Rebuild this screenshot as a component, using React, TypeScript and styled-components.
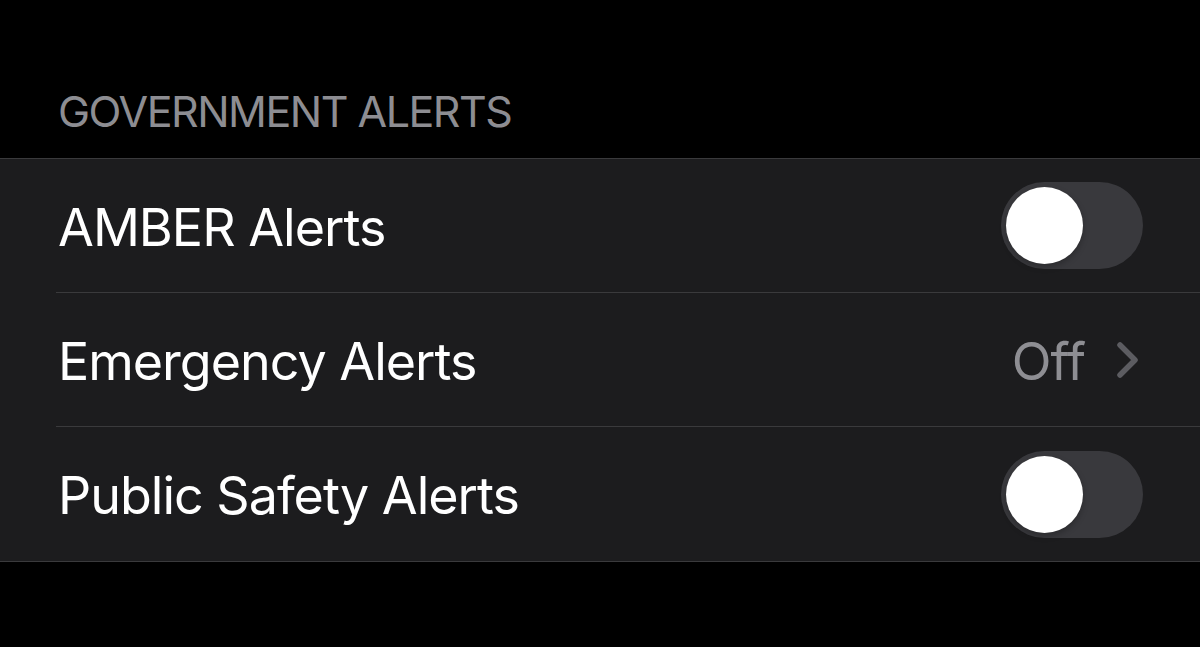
import React from "react";
import styled, { createGlobalStyle } from "styled-components";

const Global = createGlobalStyle`
  html, body { margin: 0; padding: 0; background: #000; }
  body { font-family: Inter, "Noto Sans", sans-serif; -webkit-font-smoothing: antialiased; }
`;

const Page = styled.div`
  width: 1200px;
  height: 647px;
  background: #000;
  overflow: hidden;
`;

const SectionHeader = styled.div`
  padding: 90px 0 25px 58px;
  font-size: 43px;
  line-height: 43px;
  color: #8d8d92;
  letter-spacing: -1.5px;
`;

const Group = styled.div`
  background: #1c1c1e;
  border-top: 1px solid #3a3a3c;
  border-bottom: 1px solid #3a3a3c;
`;

const Row = styled.div`
  padding-left: 56px;
`;

const RowInner = styled.div<{ $last?: boolean; $pr?: number }>`
  height: ${(p) => (p.$last ? 134 : 133)}px;
  display: flex;
  align-items: center;
  padding-left: 2px;
  padding-right: ${(p) => p.$pr ?? 57}px;
  border-bottom: ${(p) => (p.$last ? "none" : "1px solid #3a3a3c")};
`;

const Label = styled.span`
  flex: 1;
  font-size: 52px;
  letter-spacing: -1px;
  color: #fff;
  padding-top: 3px;
`;

const Value = styled.span`
  font-size: 52px;
  letter-spacing: -1px;
  color: #8e8e93;
  margin-right: 31px;
  padding-top: 3px;
`;

const Track = styled.div`
  width: 142px;
  height: 87px;
  border-radius: 44px;
  background: #39393d;
  display: flex;
  align-items: center;
  padding-left: 5px;
  box-sizing: border-box;
`;

const Knob = styled.div`
  width: 77px;
  height: 77px;
  border-radius: 50%;
  background: #fff;
  box-shadow: 0 3px 6px rgba(0, 0, 0, 0.25);
`;

const Toggle = () => (
  <Track>
    <Knob />
  </Track>
);

const Chevron = () => (
  <svg width="24" height="38" viewBox="0 0 24 38" fill="none">
    <path d="M4 4 L19 19 L4 34" stroke="#5c5c61" strokeWidth="5.5" strokeLinecap="round" strokeLinejoin="round" />
  </svg>
);

export default function App() {
  return (
    <Page>
      <Global />
      <SectionHeader>GOVERNMENT ALERTS</SectionHeader>
      <Group>
        <Row>
          <RowInner>
            <Label>AMBER Alerts</Label>
            <Toggle />
          </RowInner>
        </Row>
        <Row>
          <RowInner $pr={60}>
            <Label>Emergency Alerts</Label>
            <Value>Off</Value>
            <Chevron />
          </RowInner>
        </Row>
        <Row>
          <RowInner $last>
            <Label>Public Safety Alerts</Label>
            <Toggle />
          </RowInner>
        </Row>
      </Group>
    </Page>
  );
}
